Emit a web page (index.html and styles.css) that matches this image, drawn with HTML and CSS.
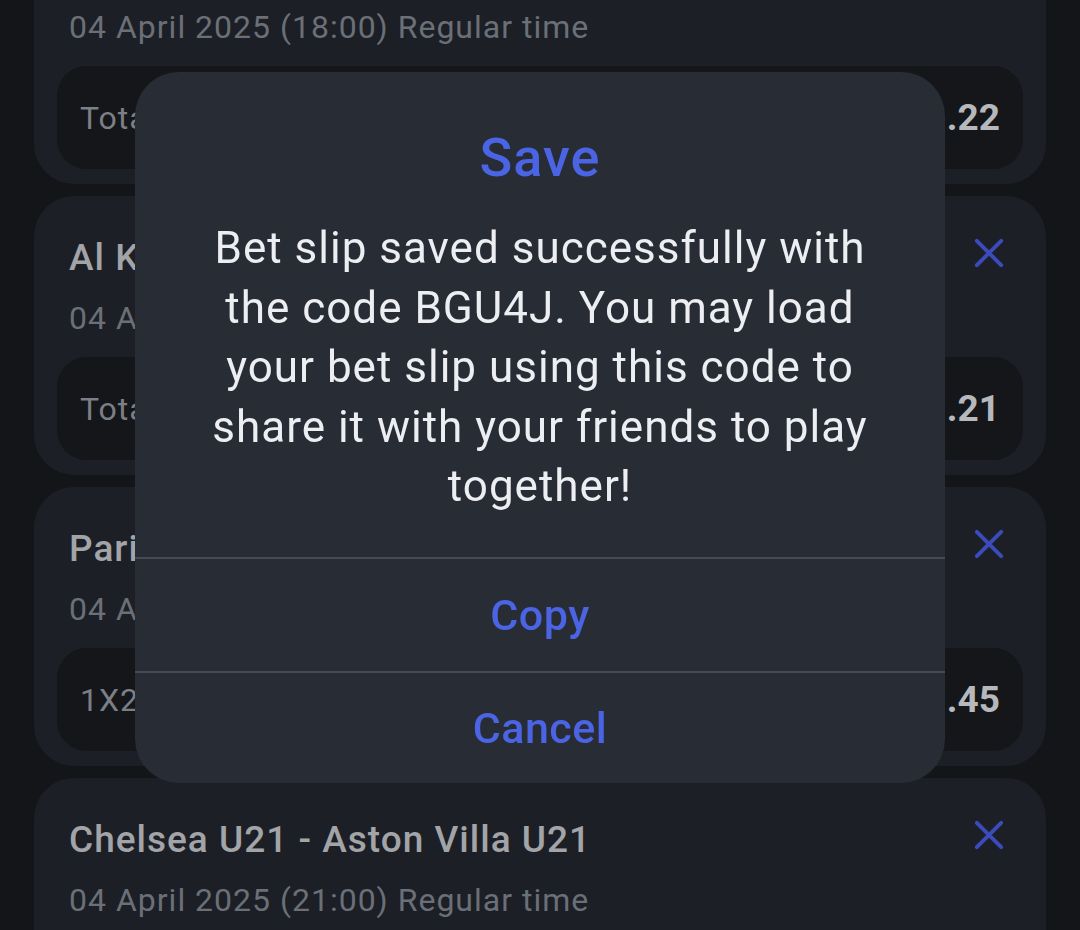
FILE: index.html
```html
<!DOCTYPE html>
<html lang="en">
<head>
<meta charset="utf-8">
<title>Bet slip</title>
<link rel="stylesheet" href="styles.css">
</head>
<body>
<div class="list">
  <div class="card">
    <div class="card-head">
      <div class="title">Al Nassr - Al Hilal</div>
      <svg class="close" viewBox="0 0 32 32"><path d="M3 3L29 29M29 3L3 29"/></svg>
    </div>
    <div class="date">04 April 2025 (18:00) Regular time</div>
    <div class="market"><span class="mk">Total over 2.5</span><span class="odd">1.22</span></div>
  </div>
  <div class="card">
    <div class="card-head">
      <div class="title">Al Khaleej - Al Fateh</div>
      <svg class="close" viewBox="0 0 32 32"><path d="M3 3L29 29M29 3L3 29"/></svg>
    </div>
    <div class="date">04 April 2025 (19:00) Regular time</div>
    <div class="market"><span class="mk">Total over 1.5</span><span class="odd">1.21</span></div>
  </div>
  <div class="card">
    <div class="card-head">
      <div class="title">Paris FC - Lorient</div>
      <svg class="close" viewBox="0 0 32 32"><path d="M3 3L29 29M29 3L3 29"/></svg>
    </div>
    <div class="date">04 April 2025 (20:00) Regular time</div>
    <div class="market"><span class="mk">1X2 Home</span><span class="odd">1.45</span></div>
  </div>
  <div class="card">
    <div class="card-head">
      <div class="title">Chelsea U21 - Aston Villa U21</div>
      <svg class="close" viewBox="0 0 32 32"><path d="M3 3L29 29M29 3L3 29"/></svg>
    </div>
    <div class="date">04 April 2025 (21:00) Regular time</div>
    <div class="market"><span class="mk">Total over 2.5</span><span class="odd">1.30</span></div>
  </div>
</div>

<div class="dialog">
  <div class="dialog-body">
    <div class="dialog-title">Save</div>
    <p class="dialog-text">Bet slip saved successfully with<br>the code BGU4J. You may load<br>your bet slip using this code to<br>share it with your friends to play<br>together!</p>
  </div>
  <div class="dialog-btn">Copy</div>
  <div class="dialog-btn">Cancel</div>
</div>
</body>
</html>
```
FILE: styles.css
```css
html, body {
  margin: 0;
  padding: 0;
}
body {
  background: #131519;
  font-family: Roboto, "Noto Sans", sans-serif;
  overflow: hidden;
  height: 930px;
}
.list {
  margin-top: -95px;
  padding: 0 34px;
  display: flex;
  flex-direction: column;
  gap: 12px;
}
.card {
  background: #1c1f25;
  border-radius: 40px;
  height: 279px;
  box-sizing: border-box;
  padding: 40px 23px 15px 23px;
}
.card-head {
  display: flex;
  align-items: center;
  justify-content: space-between;
  height: 44px;
  padding-left: 12px;
  padding-right: 19px;
}
.title {
  font-size: 37px;
  font-weight: 500;
  letter-spacing: 1px;
  color: #a2a4a8;
  line-height: 44px;
}
.close {
  width: 30px;
  height: 30px;
  margin-bottom: 10px;
  fill: none;
  stroke: #3a4cbc;
  stroke-width: 4.2;
  stroke-linecap: round;
}
.date {
  margin-top: 18px;
  padding-left: 12px;
  font-size: 32px;
  letter-spacing: 1px;
  line-height: 40px;
  color: #6b6f77;
}
.market {
  margin-top: 19px;
  height: 103px;
  background: #14161a;
  border-radius: 30px;
  display: flex;
  align-items: center;
  justify-content: space-between;
  padding: 0 23px;
}
.mk {
  font-size: 32px;
  letter-spacing: 1px;
  color: #7c7f86;
}
.odd {
  font-size: 37px;
  font-weight: 700;
  color: #b6b8bc;
}
.dialog {
  position: fixed;
  left: 135px;
  top: 72px;
  width: 810px;
  height: 711px;
  background: #282c35;
  border-radius: 44px;
  display: flex;
  flex-direction: column;
  overflow: hidden;
}
.dialog-body {
  height: 487px;
  box-sizing: border-box;
  padding-top: 54px;
  text-align: center;
  border-bottom: 2px solid #454a54;
}
.dialog-title {
  font-size: 54px;
  font-weight: 500;
  letter-spacing: 1px;
  line-height: 64px;
  color: #4a64e4;
}
.dialog-text {
  margin: 29px 0 0;
  font-size: 44px;
  line-height: 59.5px;
  letter-spacing: 1px;
  color: #eceef2;
}
.dialog-btn {
  height: 112px;
  display: flex;
  align-items: center;
  justify-content: center;
  font-size: 43px;
  font-weight: 500;
  letter-spacing: 0.5px;
  color: #4a64e4;
}
.dialog-btn + .dialog-btn {
  border-top: 2px solid #454a54;
  height: 110px;
}
```
